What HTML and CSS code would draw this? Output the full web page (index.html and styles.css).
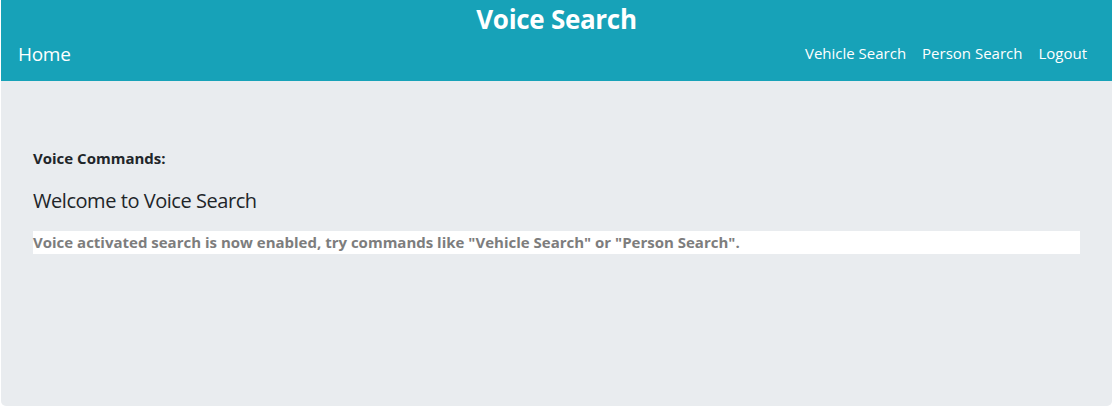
FILE: index.html
```html
<!DOCTYPE html>
<html>
<head>
<meta charset="utf-8">
<link rel="stylesheet" href="styles.css">
</head>
<body>
<div class="page">
  <header class="header">
    <h1 class="title">Voice Search</h1>
    <nav class="nav">
      <a class="home" href="#">Home</a>
      <div class="links">
        <a href="#">Vehicle Search</a>
        <a href="#">Person Search</a>
        <a href="#">Logout</a>
      </div>
    </nav>
  </header>
  <main class="jumbo">
    <div class="label">Voice Commands:</div>
    <div class="welcome">Welcome to Voice Search</div>
    <div class="msg">Voice activated search is now enabled, try commands like "Vehicle Search" or "Person Search".</div>
  </main>
</div>
</body>
</html>
```
FILE: styles.css
```css
html, body { margin: 0; padding: 0; background: #fff; }
body { font-family: "Open Sans", "Noto Sans", sans-serif; }
.page { padding: 0 1px 1px 1px; }
.header { background: #17a2b8; color: #fff; height: 81px; display: flex; flex-direction: column; }
.title { margin: 0; text-align: center; font-size: 26px; font-weight: 700; line-height: 36px; padding-top: 1px; letter-spacing: -0.3px; }
.nav { display: flex; justify-content: space-between; align-items: center; padding: 0 25px 0 17px; height: 34px; }
.nav a { color: #fff; text-decoration: none; }
.home { font-size: 19px; letter-spacing: -0.3px; }
.links { display: flex; gap: 16px; font-size: 15px; margin-top: -2px; }
.links a { font-size: 15px; }
.jumbo { background: #e9ecef; border-radius: 0 0 5px 5px; height: 325px; box-sizing: border-box; padding: 66px 32px 0 32px; color: #212529; }
.label { font-size: 15px; font-weight: 700; line-height: 22px; }
.welcome { font-size: 20px; line-height: 28px; margin-top: 18px; letter-spacing: -0.45px; }
.msg { background: #fff; color: #7d7d7d; font-size: 15px; font-weight: 700; line-height: 23px; margin-top: 16px; }
```
